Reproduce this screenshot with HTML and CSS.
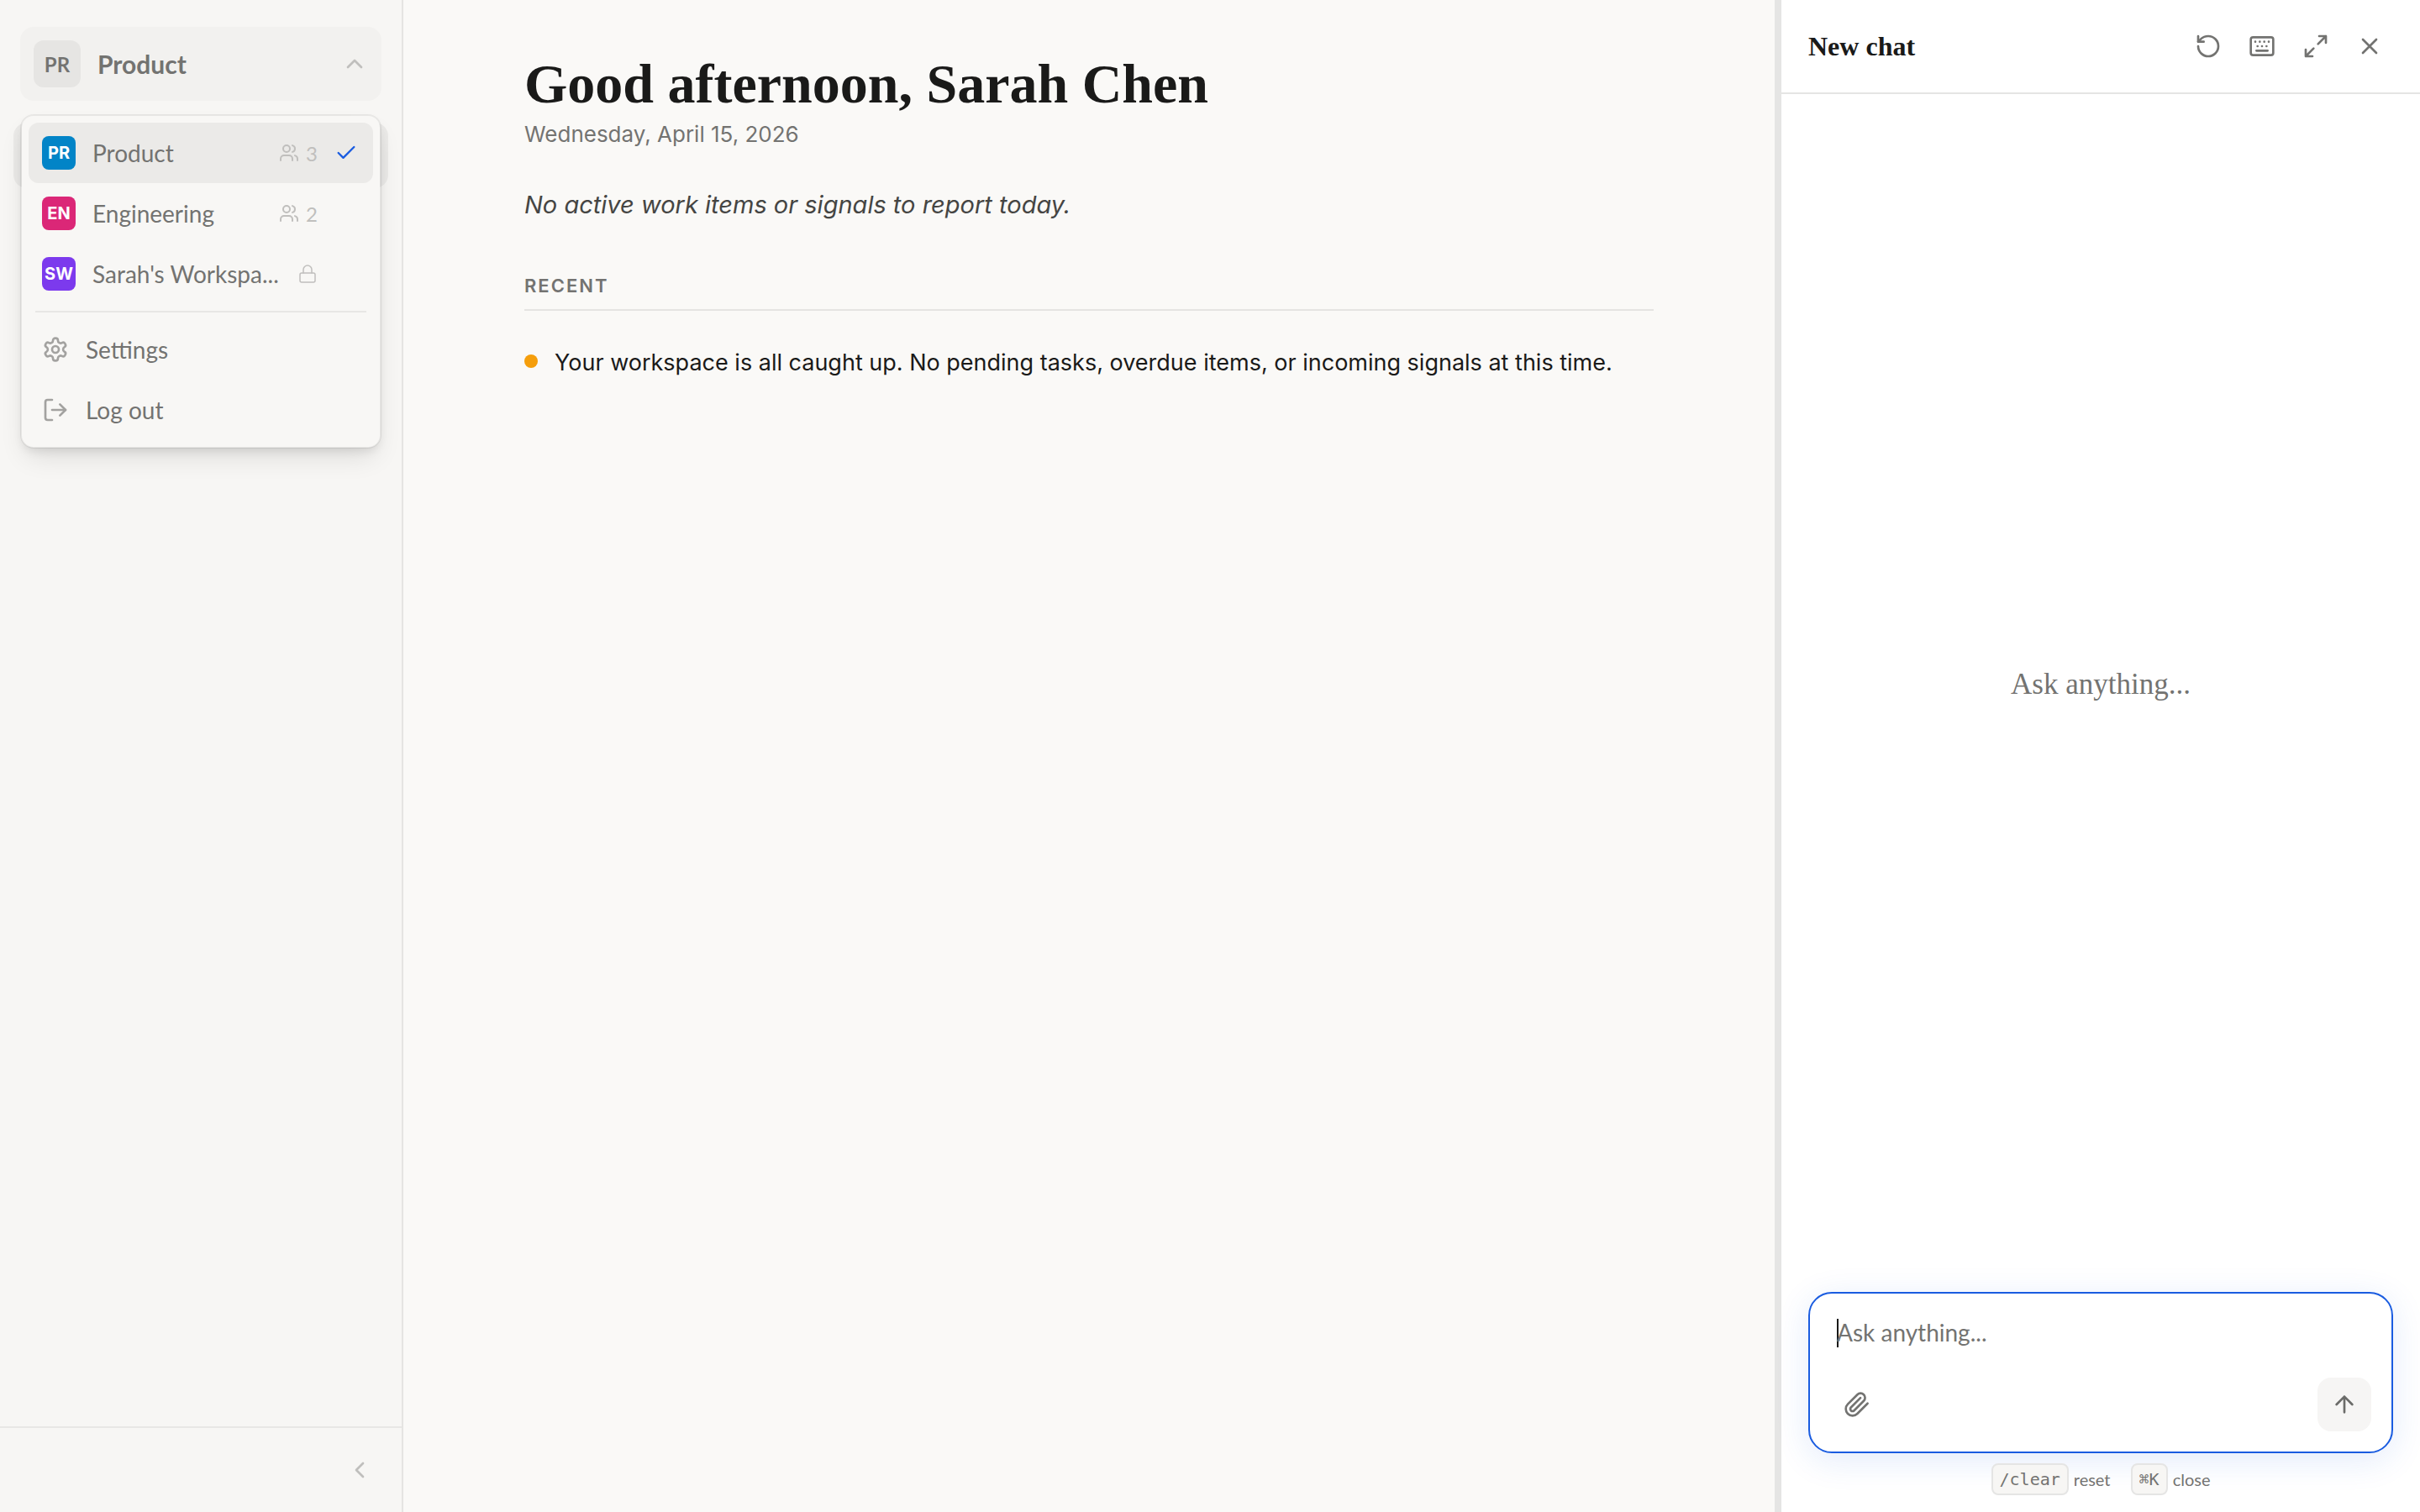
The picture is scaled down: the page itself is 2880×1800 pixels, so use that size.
FILE: index.html
```html
<!DOCTYPE html>
<html lang="en">
<head>
    <meta charset="UTF-8">
    <meta name="viewport" content="width=device-width, initial-scale=1.0">
    <title>Product</title>
    <link rel="stylesheet" href="styles.css">
</head>
<body>
    <aside class="sidebar">
        <div class="switcher">
            <button class="switcher-btn" type="button">
                <span class="avatar">PR</span>
                <span class="switcher-name">Product</span>
                <svg class="icon faint" viewBox="0 0 24 24"><path d="m18 15-6-6-6 6"/></svg>
            </button>

            <div class="menu">
                <button class="menu-item active" type="button">
                    <span class="badge blue">PR</span>
                    <span class="menu-name">Product</span>
                    <span class="members">
                        <svg class="icon small" viewBox="0 0 24 24"><path d="M16 21v-2a4 4 0 0 0-4-4H6a4 4 0 0 0-4 4v2"/><circle cx="9" cy="7" r="4"/><path d="M22 21v-2a4 4 0 0 0-3-3.87"/><path d="M16 3.13a4 4 0 0 1 0 7.75"/></svg>
                        3
                    </span>
                    <svg class="icon check" viewBox="0 0 24 24"><path d="M20 6 9 17l-5-5"/></svg>
                </button>
                <button class="menu-item" type="button">
                    <span class="badge pink">EN</span>
                    <span class="menu-name">Engineering</span>
                    <span class="members">
                        <svg class="icon small" viewBox="0 0 24 24"><path d="M16 21v-2a4 4 0 0 0-4-4H6a4 4 0 0 0-4 4v2"/><circle cx="9" cy="7" r="4"/><path d="M22 21v-2a4 4 0 0 0-3-3.87"/><path d="M16 3.13a4 4 0 0 1 0 7.75"/></svg>
                        2
                    </span>
                    <span class="check"></span>
                </button>
                <button class="menu-item" type="button">
                    <span class="badge purple">SW</span>
                    <span class="menu-name">Sarah's Workspa...</span>
                    <span class="members">
                        <svg class="icon small lock" viewBox="0 0 24 24"><rect x="3" y="11" width="18" height="11" rx="2"/><path d="M7 11V7a5 5 0 0 1 10 0v4"/></svg>
                    </span>
                    <span class="check"></span>
                </button>
                <hr class="menu-line">
                <button class="menu-item action" type="button">
                    <svg class="icon" viewBox="0 0 24 24"><path d="M12.22 2h-.44a2 2 0 0 0-2 2v.18a2 2 0 0 1-1 1.73l-.43.25a2 2 0 0 1-2 0l-.15-.08a2 2 0 0 0-2.73.73l-.22.38a2 2 0 0 0 .73 2.73l.15.1a2 2 0 0 1 1 1.72v.51a2 2 0 0 1-1 1.74l-.15.09a2 2 0 0 0-.73 2.73l.22.38a2 2 0 0 0 2.73.73l.15-.08a2 2 0 0 1 2 0l.43.25a2 2 0 0 1 1 1.73V20a2 2 0 0 0 2 2h.44a2 2 0 0 0 2-2v-.18a2 2 0 0 1 1-1.73l.43-.25a2 2 0 0 1 2 0l.15.08a2 2 0 0 0 2.73-.73l.22-.39a2 2 0 0 0-.73-2.73l-.15-.08a2 2 0 0 1-1-1.74v-.5a2 2 0 0 1 1-1.74l.15-.09a2 2 0 0 0 .73-2.73l-.22-.38a2 2 0 0 0-2.73-.73l-.15.08a2 2 0 0 1-2 0l-.43-.25a2 2 0 0 1-1-1.73V4a2 2 0 0 0-2-2z"/><circle cx="12" cy="12" r="3"/></svg>
                    <span class="menu-name">Settings</span>
                </button>
                <button class="menu-item action" type="button">
                    <svg class="icon" viewBox="0 0 24 24"><path d="M9 21H5a2 2 0 0 1-2-2V5a2 2 0 0 1 2-2h4"/><path d="m16 17 5-5-5-5"/><path d="M21 12H9"/></svg>
                    <span class="menu-name">Log out</span>
                </button>
            </div>
        </div>

        <nav class="nav">
            <a class="nav-link" href="#" aria-label="Home"></a>
        </nav>

        <div class="sidebar-footer">
            <button class="icon-btn" type="button" aria-label="Collapse sidebar">
                <svg class="icon faint" viewBox="0 0 24 24"><path d="m15 18-6-6 6-6"/></svg>
            </button>
        </div>
    </aside>

    <main class="main">
        <div class="content">
            <h1>Good afternoon, Sarah Chen</h1>
            <p class="date">Wednesday, April 15, 2026</p>
            <p class="summary">No active work items or signals to report today.</p>
            <h2>Recent</h2>
            <ul class="recent">
                <li>Your workspace is all caught up. No pending tasks, overdue items, or incoming signals at this time.</li>
            </ul>
        </div>
    </main>

    <section class="chat">
        <header class="chat-header">
            <h3>New chat</h3>
            <button class="icon-btn" type="button" aria-label="Reset chat">
                <svg class="icon" viewBox="0 0 24 24"><path d="M3 12a9 9 0 1 0 9-9 9.75 9.75 0 0 0-6.74 2.74L3 8"/><path d="M3 3v5h5"/></svg>
            </button>
            <button class="icon-btn" type="button" aria-label="Keyboard shortcuts">
                <svg class="icon" viewBox="0 0 24 24"><rect x="2" y="4" width="20" height="16" rx="2"/><path d="M6 8h.01M10 8h.01M14 8h.01M18 8h.01M8 12h.01M12 12h.01M16 12h.01M7 16h10"/></svg>
            </button>
            <button class="icon-btn" type="button" aria-label="Expand">
                <svg class="icon" viewBox="0 0 24 24"><path d="M15 3h6v6M21 3l-7 7M3 21l7-7M9 21H3v-6"/></svg>
            </button>
            <button class="icon-btn" type="button" aria-label="Close">
                <svg class="icon" viewBox="0 0 24 24"><path d="M18 6 6 18M6 6l12 12"/></svg>
            </button>
        </header>

        <div class="chat-body">Ask anything...</div>

        <form class="composer">
            <textarea id="message" rows="1" placeholder="Ask anything..." aria-label="Message"></textarea>
            <div class="composer-bar">
                <button class="icon-btn" type="button" aria-label="Attach file">
                    <svg class="icon" viewBox="0 0 24 24"><path d="m21.44 11.05-9.19 9.19a6 6 0 0 1-8.49-8.49l8.57-8.57A4 4 0 1 1 18 8.84l-8.59 8.57a2 2 0 0 1-2.83-2.83l8.49-8.48"/></svg>
                </button>
                <button class="send-btn" type="submit" aria-label="Send">
                    <svg class="icon" viewBox="0 0 24 24"><path d="m5 12 7-7 7 7M12 19V5"/></svg>
                </button>
            </div>
        </form>

        <footer class="hints">
            <span class="hint"><kbd>/clear</kbd> reset</span>
            <span class="hint"><kbd>⌘K</kbd> close</span>
        </footer>
    </section>
</body>
</html>
```
FILE: styles.css
```css
* {
    box-sizing: border-box;
}
body {
    margin: 0;
    height: 100vh;
    display: flex;
    background-color: #faf9f7;
    color: #1a1a19;
    font-family: Inter, "Liberation Sans", sans-serif;
    font-size: 27px;
}
button {
    border: none;
    background: none;
    padding: 0;
    font: inherit;
    color: inherit;
    cursor: pointer;
}
.icon {
    width: 32px;
    height: 32px;
    flex: none;
    fill: none;
    stroke: currentColor;
    stroke-width: 2;
    stroke-linecap: round;
    stroke-linejoin: round;
}
.icon-btn {
    width: 56px;
    height: 56px;
    display: flex;
    align-items: center;
    justify-content: center;
    color: #737371;
}
.faint {
    color: #c0bfbd;
}

/* Sidebar */
.sidebar {
    width: 480px;
    flex: none;
    display: flex;
    flex-direction: column;
    background-color: #f7f6f4;
    border-right: 2px solid #e5e4e2;
    font-family: Lato, "Liberation Sans", sans-serif;
    font-size: 28px;
}
.switcher {
    position: relative;
    padding: 32px 24px 26px;
}
.switcher-btn {
    width: 100%;
    height: 88px;
    padding: 0 16px;
    display: flex;
    align-items: center;
    gap: 20px;
    background-color: #f2f1ef;
    border-radius: 16px;
    color: #737371;
    font-size: 30px;
    font-weight: 700;
}
.switcher-name {
    flex: 1;
    text-align: left;
}
.avatar {
    width: 56px;
    height: 56px;
    display: flex;
    align-items: center;
    justify-content: center;
    background-color: #e6e5e3;
    border-radius: 12px;
    font-size: 24px;
}
.menu {
    position: absolute;
    top: 136px;
    left: 24px;
    right: 24px;
    padding: 8px;
    background-color: #f8f7f5;
    background-clip: padding-box;
    border: 2px solid rgba(0, 0, 0, 0.06);
    border-radius: 16px;
    box-shadow: 0 16px 32px -8px rgba(0, 0, 0, 0.12), 0 6px 12px -4px rgba(0, 0, 0, 0.1);
}
.menu-item {
    width: 100%;
    height: 72px;
    padding: 0 18px 0 16px;
    display: flex;
    align-items: center;
    gap: 20px;
    border-radius: 12px;
    color: #737371;
    text-align: left;
}
.menu-item.active {
    background-color: #ebeae8;
}
.menu-item.action .icon {
    color: #a3a2a0;
}
.menu-name {
    flex: 1;
    white-space: nowrap;
}
.badge {
    width: 40px;
    height: 40px;
    flex: none;
    display: flex;
    align-items: center;
    justify-content: center;
    border-radius: 8px;
    color: #fff;
    font-family: Inter, sans-serif;
    font-size: 20px;
    font-weight: 700;
}
.blue {
    background-color: #0284c7;
}
.pink {
    background-color: #db2777;
}
.purple {
    background-color: #7c3aed;
}
.members {
    display: flex;
    align-items: center;
    gap: 8px;
    color: #c0bfbd;
    font-size: 24px;
}
.small {
    width: 24px;
    height: 24px;
}
.lock {
    stroke-width: 1.5;
}
.check {
    width: 28px;
    height: 28px;
    flex: none;
    color: #1a5ce0;
}
.menu-line {
    height: 2px;
    margin: 8px;
    border: none;
    background-color: #e8e7e5;
}
.nav {
    flex: 1;
    padding: 0 16px;
}
.nav-link {
    display: block;
    height: 78px;
    background-color: #ebeae8;
    border-radius: 16px;
}
.sidebar-footer {
    height: 102px;
    padding: 0 22px;
    display: flex;
    align-items: center;
    justify-content: flex-end;
    border-top: 2px solid #e8e7e5;
}

/* Main */
.main {
    flex: 1;
    padding: 64px 144px;
}
.content {
    max-width: 1344px;
    margin: 0 auto;
}
h1 {
    margin: 0;
    font-family: "Liberation Serif", serif;
    font-size: 66px;
    line-height: 72px;
}
.date {
    margin: 4px 0 40px;
    color: #737371;
    font-size: 26px;
    line-height: 40px;
}
.summary {
    margin: 0 0 56px;
    color: #454543;
    font-size: 29px;
    font-style: italic;
    line-height: 48px;
}
h2 {
    margin: 0 0 38px;
    padding-bottom: 12px;
    border-bottom: 2px solid #e5e4e2;
    color: #737371;
    font-size: 22px;
    font-weight: 600;
    line-height: 32px;
    letter-spacing: 2px;
    text-transform: uppercase;
}
.recent {
    margin: 0;
    padding: 0;
    list-style: none;
}
.recent li {
    display: flex;
    align-items: flex-start;
    gap: 20px;
    line-height: 48px;
}
.recent li::before {
    content: "";
    width: 16px;
    height: 16px;
    margin-top: 14px;
    border-radius: 50%;
    background-color: #f59e0b;
}

/* Chat */
.chat {
    width: 768px;
    flex: none;
    display: flex;
    flex-direction: column;
    background-color: #fff;
    border-left: 8px solid #e5e5e4;
}
.chat-header {
    height: 112px;
    padding: 0 32px;
    display: flex;
    align-items: center;
    gap: 8px;
    border-bottom: 2px solid #e5e5e4;
}
h3 {
    flex: 1;
    margin: 0;
    font-family: "Liberation Serif", serif;
    font-size: 32px;
}
.chat-body {
    flex: 1;
    padding-bottom: 20px;
    display: flex;
    align-items: center;
    justify-content: center;
    color: #737371;
    font-family: "Liberation Serif", serif;
    font-size: 35px;
}
.composer {
    height: 192px;
    margin: 0 32px;
    padding: 24px;
    display: flex;
    flex-direction: column;
    justify-content: space-between;
    border: 2px solid #1a5ce0;
    border-radius: 28px;
    box-shadow: 0 8px 40px rgba(26, 92, 224, 0.12);
}
textarea {
    height: 48px;
    padding: 0 8px;
    border: none;
    outline: none;
    resize: none;
    /* resting caret */
    background: linear-gradient(#1a1a19, #1a1a19) 8px 6px / 2px 34px no-repeat;
    color: #1a1a19;
    font-family: Lato, "Liberation Sans", sans-serif;
    font-size: 28px;
    line-height: 44px;
}
textarea::placeholder {
    color: #737371;
}
.composer-bar {
    padding-left: 4px;
    display: flex;
    align-items: center;
    justify-content: space-between;
}
.send-btn {
    width: 64px;
    height: 64px;
    display: flex;
    align-items: center;
    justify-content: center;
    background-color: #f6f5f4;
    border-radius: 16px;
    color: #6b6b69;
}
.hints {
    height: 70px;
    padding-top: 12px;
    display: flex;
    justify-content: center;
    gap: 24px;
    color: #737371;
    font-family: Lato, "Liberation Sans", sans-serif;
    font-size: 20px;
}
.hint {
    height: 38px;
    display: flex;
    align-items: center;
    gap: 6px;
}
kbd {
    padding: 0 8px;
    background-color: #f7f6f4;
    border: 2px solid #e5e5e4;
    border-radius: 8px;
    font-family: "DejaVu Sans Mono", monospace;
    font-size: 20px;
    line-height: 34px;
}
```
